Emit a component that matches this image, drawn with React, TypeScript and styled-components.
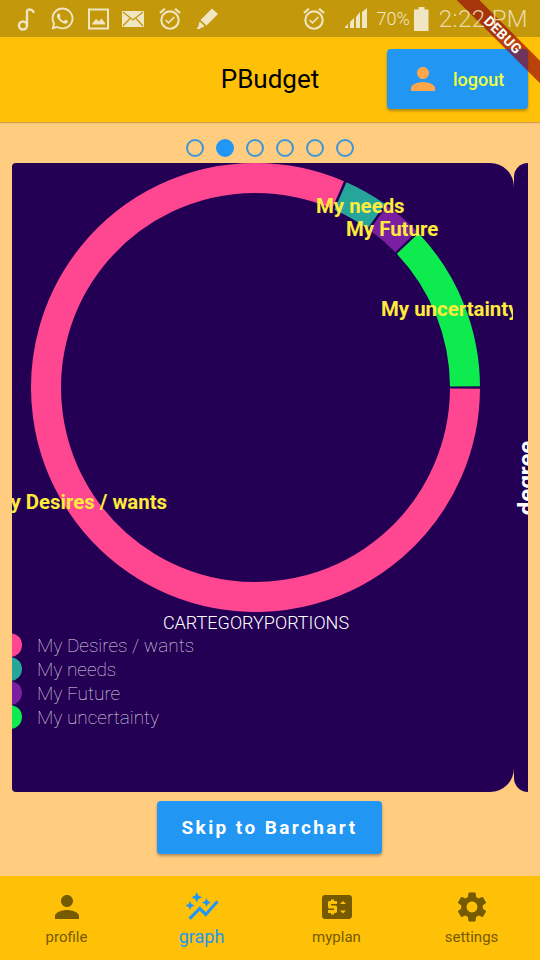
import React from "react";
import styled, { createGlobalStyle } from "styled-components";
import { FaWhatsapp } from "react-icons/fa";
import { MdPerson, MdSettings, MdAutoGraph, MdPriceChange, MdOutlineAlarmOn } from "react-icons/md";

const Global = createGlobalStyle`
  html, body { margin: 0; padding: 0; }
  body { font-family: Roboto, "Liberation Sans", sans-serif; background: #ffcc80; }
  * { box-sizing: border-box; }
`;

const Screen = styled.div`
  position: relative;
  width: 540px;
  height: 960px;
  display: flex;
  flex-direction: column;
  overflow: hidden;
  background: #ffcc80;
`;

const StatusBar = styled.div`
  position: relative;
  z-index: 3;
  height: 37px;
  flex: none;
  display: flex;
  align-items: center;
  justify-content: space-between;
  padding: 0 12px 0 17px;
  color: #f0e6c4;
`;
const StatusBarTint = styled.div`
  position: absolute;
  inset: 0 0 auto 0;
  height: 37px;
  background: #c3980b;
`;
const StatusGroup = styled.div<{ $gap: number }>`
  display: flex;
  align-items: center;
  gap: ${(p) => p.$gap}px;
`;
const Percent = styled.span`
  font-size: 18px;
  font-weight: 300;
  margin: 0 -4px 0 0;
`;
const Clock = styled.span`
  font-size: 24px;
  font-weight: 300;
  letter-spacing: 0.4px;
  margin-left: 2px;
  opacity: 0.85;
`;

const AppBar = styled.header`
  position: relative;
  z-index: 1;
  flex: none;
  height: 85px;
  display: grid;
  grid-template-columns: 1fr auto 1fr;
  align-items: center;
  padding: 0 12px 1px;
  background: #ffc107;
  box-shadow: 0 1px 1px rgba(120, 80, 0, 0.35);
`;
const Title = styled.h1`
  grid-column: 2;
  margin: 0;
  font-size: 26px;
  font-weight: 400;
  color: #000;
`;
const LogoutButton = styled.button`
  grid-column: 3;
  justify-self: end;
  width: 141px;
  height: 60px;
  border: 0;
  border-radius: 4px;
  display: flex;
  align-items: center;
  gap: 12px;
  padding: 0 0 0 18px;
  background: #2196f3;
  color: #eeff41;
  font: 500 18px Roboto, sans-serif;
  box-shadow: 0 2px 3px rgba(0, 0, 0, 0.3);
  svg { color: #ffa54a; }
`;

const Main = styled.main`
  flex: 1;
  min-height: 0;
  display: flex;
  flex-direction: column;
  align-items: center;
`;
const Dots = styled.div`
  height: 41px;
  flex: none;
  display: flex;
  align-items: center;
  gap: 12px;
  padding-top: 11px;
`;
const Dot = styled.span<{ $active?: boolean }>`
  width: 18px;
  height: 18px;
  border-radius: 50%;
  border: 2px solid ${(p) => (p.$active ? "#2196f3" : "#3f97d8")};
  background: ${(p) => (p.$active ? "#2196f3" : "transparent")};
`;
const Carousel = styled.div`
  align-self: stretch;
  height: 629px;
  flex: none;
  display: flex;
  margin: 0 12px;
`;
const Card = styled.section`
  width: 502px;
  flex: none;
  overflow: hidden;
  background: #240055;
  border-radius: 4px 24px 24px 4px;
  display: flex;
  flex-direction: column;
`;
const PeekCard = styled.section`
  flex: 1;
  overflow: hidden;
  background: #240055;
  border-radius: 24px 0 0 24px;
`;
const PeekInner = styled.div`
  width: 26px;
  height: 100%;
  display: flex;
  align-items: center;
  justify-content: center;
`;
const PeekText = styled.span`
  flex: none;
  transform: rotate(-90deg);
  color: #fff;
  font-size: 24px;
  font-weight: 700;
  white-space: nowrap;
`;
const ChartSvg = styled.svg`
  display: block;
  flex: none;
  font-family: Roboto, sans-serif;
`;
const SliceLabel = styled.text`
  fill: #ffeb3b;
  font-size: 20.4px;
  font-weight: 700;
`;
const ChartTitle = styled.div`
  height: 21px;
  line-height: 21px;
  text-align: center;
  color: #fff;
  font-size: 18px;
  font-weight: 300;
  padding-right: 14px;
`;
const Legend = styled.ul`
  margin: 0;
  padding: 0;
  list-style: none;
`;
const LegendRow = styled.li`
  height: 24px;
  display: flex;
  align-items: center;
  gap: 15px;
  margin-left: -14px;
  color: rgba(255, 255, 255, 0.85);
  font-size: 19px;
  font-weight: 100;
`;
const Marker = styled.span<{ $color: string }>`
  width: 24px;
  height: 24px;
  border-radius: 50%;
  background: ${(p) => p.$color};
`;
const SkipButton = styled.button`
  margin: 9px 1px 0 0;
  width: 225px;
  height: 53px;
  border: 0;
  border-radius: 4px;
  background: #2196f3;
  color: #fff;
  font: 700 19px Roboto, sans-serif;
  letter-spacing: 2.4px;
  box-shadow: 0 2px 3px rgba(0, 0, 0, 0.3);
`;

const BottomNav = styled.nav`
  flex: none;
  height: 84px;
  display: grid;
  grid-template-columns: repeat(4, 1fr);
  background: #ffc107;
`;
const NavItem = styled.div<{ $active?: boolean }>`
  display: flex;
  flex-direction: column;
  align-items: center;
  padding: 13px 2px 0 0;
  color: ${(p) => (p.$active ? "#2196f3" : "#755a00")};
  font-size: ${(p) => (p.$active ? 18 : 15)}px;
  line-height: 18px;
  span { margin-top: 3px; }
`;

const Banner = styled.div`
  position: absolute;
  z-index: 2;
  top: 27px;
  left: 443px;
  width: 120px;
  height: 16px;
  line-height: 16px;
  transform: rotate(45deg);
  background: rgba(150, 0, 10, 0.65);
  color: #fff;
  font-size: 14px;
  font-weight: 700;
  letter-spacing: 0.4px;
  text-align: center;
`;

const CX = 243.5;
const CY = 224.5;
const R = 209.5;
const pt = (deg: number, r: number) => {
  const a = (deg * Math.PI) / 180;
  return `${CX + r * Math.cos(a)} ${CY + r * Math.sin(a)}`;
};
const arc = (from: number, to: number) =>
  `M${pt(from, R)} A${R} ${R} 0 ${to - from > 180 ? 1 : 0} 1 ${pt(to, R)}`;

const slices = [
  { name: "My Desires / wants", color: "#ff4791", from: 0.3, to: 293.2 },
  { name: "My needs", color: "#26a69a", from: 293.9, to: 305.2 },
  { name: "My Future", color: "#7b1fa2", from: 305.9, to: 315.9 },
  { name: "My uncertainty", color: "#0eeb4f", from: 316.6, to: 359.7 },
];

const labels = [
  { text: "My needs", x: 304, y: 50 },
  { text: "My Future", x: 334, y: 73 },
  { text: "My uncertainty", x: 369, y: 153 },
  { text: "My Desires / wants", x: -19.4, y: 346 },
];

export default function App() {
  return (
    <Screen>
      <Global />
      <StatusBarTint />
      <Banner>DEBUG</Banner>
      <StatusBar>
        <StatusGroup $gap={13}>
          <svg width="20" height="24" viewBox="0 0 20 24" fill="none" stroke="currentColor" strokeWidth="2.4">
            <circle cx="6" cy="18.500" r="4" />
            <path d="M10 18.500V4c.5-2.500 5-2 6.500 1" strokeLinecap="round" />
          </svg>
          <FaWhatsapp size={25} />
          <svg width="21" height="22" viewBox="0 0 21 22">
            <path d="M1 1.500h19v19H1z" fill="none" stroke="currentColor" strokeWidth="2" />
            <path d="M4.500 15l3.500-4 3 2.500 2.500-3 3.500 4.500v1.500H4.500z" fill="currentColor" />
          </svg>
          <svg width="22" height="16" viewBox="0 0 22 16">
            <path d="M0 0h22v16H0z" fill="currentColor" />
            <path d="M1 1l10 8 10-8M1 15l7-7.500M21 15l-7-7.500" fill="none" stroke="#c3980b" strokeWidth="1.300" />
          </svg>
          <MdOutlineAlarmOn size={26} />
          <svg width="23" height="22" viewBox="0 0 23 22" fill="currentColor">
            <path d="M16 0.500l6 5.500-11.500 11.500-6-5.500zM3.500 13.500l5 4.500-1.500 1.500H5l-1 1.500H0.500l2-3z" />
          </svg>
        </StatusGroup>
        <StatusGroup $gap={8}>
          <MdOutlineAlarmOn size={26} />
          <svg width="26" height="24" viewBox="0 0 26 24" fill="currentColor" style={{ marginLeft: 8 }}>
            <path d="M2 20l3-3v4H2zM7 15l4-4v10H7zM13 10l4-5v16h-4zM19 5l5-4v20h-5z" />
          </svg>
          <Percent>70%</Percent>
          <svg width="15" height="24" viewBox="0 0 15 24" fill="currentColor">
            <path d="M4.500 0h6v2.500h4V24H0V2.500h4.500z" />
          </svg>
          <Clock>2:22 PM</Clock>
        </StatusGroup>
      </StatusBar>
      <AppBar>
        <Title>PBudget</Title>
        <LogoutButton>
          <MdPerson size={36} />
          logout
        </LogoutButton>
      </AppBar>
      <Main>
        <Dots>
          {[0, 1, 2, 3, 4, 5].map((i) => (
            <Dot key={i} $active={i === 1} />
          ))}
        </Dots>
        <Carousel>
          <Card>
            <ChartSvg width="501" height="449" viewBox="0 0 501 449">
              {slices.map((s) => (
                <path key={s.name} d={arc(s.from, s.to)} fill="none" stroke={s.color} strokeWidth="30" />
              ))}
              {labels.map((l) => (
                <SliceLabel key={l.text} x={l.x} y={l.y}>
                  {l.text}
                </SliceLabel>
              ))}
            </ChartSvg>
            <ChartTitle>CARTEGORYPORTIONS</ChartTitle>
            <Legend>
              {slices.map((s) => (
                <LegendRow key={s.name}>
                  <Marker $color={s.color} />
                  {s.name}
                </LegendRow>
              ))}
            </Legend>
          </Card>
          <PeekCard>
            <PeekInner>
              <PeekText>degree</PeekText>
            </PeekInner>
          </PeekCard>
        </Carousel>
        <SkipButton>Skip to Barchart</SkipButton>
      </Main>
      <BottomNav>
        <NavItem>
          <MdPerson size={36} />
          <span>profile</span>
        </NavItem>
        <NavItem $active>
          <MdAutoGraph size={36} />
          <span>graph</span>
        </NavItem>
        <NavItem>
          <MdPriceChange size={36} />
          <span>myplan</span>
        </NavItem>
        <NavItem>
          <MdSettings size={36} />
          <span>settings</span>
        </NavItem>
      </BottomNav>
    </Screen>
  );
}
